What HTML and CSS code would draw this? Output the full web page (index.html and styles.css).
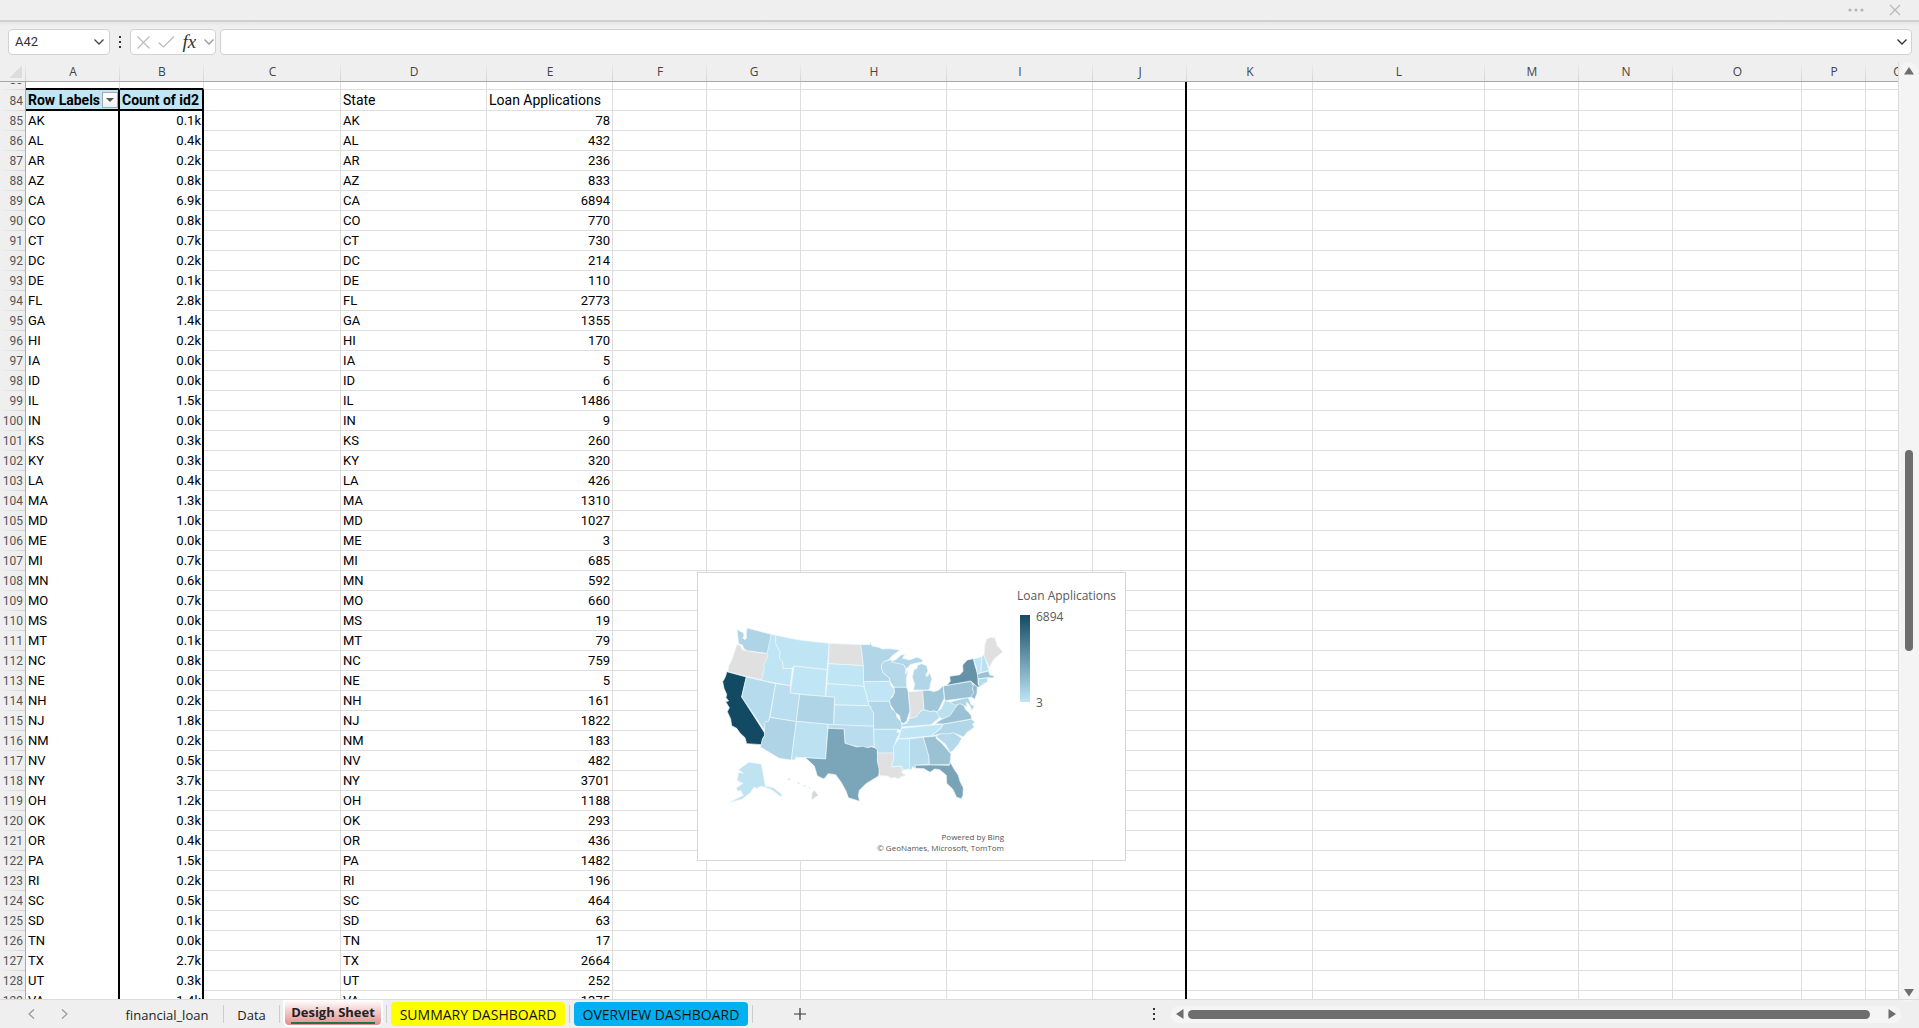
FILE: index.html
```html
<!DOCTYPE html>
<html lang="en">
<head>
<meta charset="utf-8">
<title>Desigh Sheet</title>
<link rel="stylesheet" href="styles.css">
</head>
<body>
<header class="titlebar">
  <button class="icon-btn" aria-label="More"><svg width="16" height="4" viewBox="0 0 16 4" fill="#b5b5b5"><circle cx="2" cy="2" r="1.6"/><circle cx="8" cy="2" r="1.6"/><circle cx="14" cy="2" r="1.6"/></svg></button>
  <button class="icon-btn" aria-label="Close"><svg width="12" height="12" viewBox="0 0 12 12" stroke="#b8b8b8" stroke-width="1.2"><path d="M1 1l10 10M11 1L1 11"/></svg></button>
</header>
<div class="formula-row">
  <div class="field name-box">
    <input class="name-input" aria-label="Name box" value="A42">
    <button class="icon-btn" aria-label="Names"><svg width="10" height="6" viewBox="0 0 10 6" fill="none" stroke="#444" stroke-width="1.3"><path d="M.5.5L5 5 9.500.5"/></svg></button>
  </div>
  <svg class="grip" width="3" height="12" viewBox="0 0 3 12" fill="#333"><path d="M0 0h2v2H0zM0 5h2v2H0zM0 10h2v2H0z"/></svg>
  <div class="field fx-box">
    <button class="icon-btn" aria-label="Cancel"><svg width="13" height="13" viewBox="0 0 13 13" stroke="#bcbcbc" stroke-width="1.2"><path d="M.5.5l12 12M12.500.5l-12 12"/></svg></button>
    <button class="icon-btn" aria-label="Enter"><svg width="17" height="12" viewBox="0 0 17 12" fill="none" stroke="#bcbcbc" stroke-width="1.2"><path d="M.5 6.500L5.500 11 16 .5"/></svg></button>
    <button class="icon-btn fx" aria-label="Insert function">fx</button>
    <button class="icon-btn" aria-label="Functions"><svg width="10" height="6" viewBox="0 0 10 6" fill="none" stroke="#999" stroke-width="1.3"><path d="M.5.5L5 5 9.500.5"/></svg></button>
  </div>
  <div class="field formula">
    <input class="formula-input" aria-label="Formula bar" value="">
    <button class="icon-btn" aria-label="Expand formula bar"><svg width="10" height="6" viewBox="0 0 10 6" fill="none" stroke="#333" stroke-width="1.4"><path d="M.5.5L5 5 9.500.5"/></svg></button>
  </div>
</div>
<main class="workspace">
  <div class="pane">
    <table class="sheet">
      <colgroup id="cols"></colgroup>
      <thead><tr id="letters"></tr></thead>
      <tbody id="rows"></tbody>
    </table>
    <svg class="chart" viewBox="0 0 427 287" role="img" aria-label="Loan applications by state">
      <defs><linearGradient id="ramp" x1="0" y1="0" x2="0" y2="1"><stop offset="0" stop-color="#124a63"/><stop offset="1" stop-color="#c0e6f6"/></linearGradient></defs>
      <g class="map" transform="scale(.3333) translate(-24 -24)">
        <path fill="#aed4e5" d="M141 193l9 6 10 4 2 10-4 5 6 6 6-5-1-14 2-16 73 19-9 58-22-3-28-4-14-1-10-8-4-10-11-4z"/>
        <path fill="#e0e0e0" d="M141 238l11 4 4 12 29 6 50 6 3 8-13 26 4 8-10 38-105-26 2-16 12-26z"/>
        <path fill="#124a63" d="M110 320L169 336 155 396 224 504 225 510 218 522 215 539 170 536 165 518 150 504 140 490 125 482 122 462 112 440 118 428 107 410 116 408 108 398 110 388 102 370 98 350 104 340 108 330z"/>
        <path fill="#b6dbec" d="M169 336l88 20-18 101-3 12-8 1-4 26-69-100z"/>
        <path fill="#bfe4f4" d="M244 208l13 3v25l14 26-3 18 10 10 2 21 27-1-6 52-86-16 8-38-2-8 13-26-3-8z"/>
        <path fill="#bfe4f4" d="M257 211q75 18 161 24l-7 79-99-11-5 7-27 1-2-21-10-10 3-18-14-26z"/>
        <path fill="#c0e6f5" d="M312 303l99 11-5 81-105-11z"/>
        <path fill="#e0e0e0" d="M418 235l94 4 4 26 4 37-105-6z"/>
        <path fill="#c0e6f5" d="M415 296l105 6 1 48 2 16-8-3-15-1-89-6z"/>
        <path fill="#c0e6f5" d="M411 356l89 6 15 1 8 4 7 23 7 32-103-2v-23l-27-2z"/>
        <path fill="#badeef" d="M257 356l44 6v22l28 4-10 82-79-13z"/>
        <path fill="#aed4e5" d="M329 388l105 9-3 83-112-11z"/>
        <path fill="#aed4e5" d="M240 457l79 13-15 115-36-5-57-34 3-8 3-15 7-12-1-8 2-33 10-1z"/>
        <path fill="#bce1f1" d="M319 469l95 9-7 104-61-4-29-1-1 7-12 1z"/>
        <path fill="#bbe0f1" d="M434 420l103 2 7 4-2 5 9 12v41l-120-4z"/>
        <path fill="#b9ddee" d="M414 478l137 6 2 62-12-2-11 6-24-4-24-6-17-5-3-43-48-2z"/>
        <path fill="#7ba5b9" d="M414 490L462 492 465 535 482 540 500 546 520 544 532 548 544 545 560 550 563 556V590L569 612 566 633 528 656 508 676 505 692 509 709 475 698 468 678 453 651 437 629 415 626 402 642 382 633 373 603 346 578 407 582z"/>
        <path fill="#b1d6e7" d="M512 239h28l2-7 4 11 19 4 12 5 22-1 31 4-22 16-10 12-17 7-7 13 4 19 20 17 2 10-79 1-1-48-4-37z"/>
        <path fill="#c0e6f5" d="M521 350l79-1 2 11 12 14-2 14-8 8-6 14-64-1-4-19-7-24z"/>
        <path fill="#b1d6e7" d="M534 409h64l7 23 13 8 3 17 12 13 4 14-5 12-8-3h-73v-50l-9-12 2-5-7-4z"/>
        <path fill="#bbe0f1" d="M551 493h73l-3 9h9l-10 20-9 23v20h-50l2-9-10-11z"/>
        <path fill="#e0e0e0" d="M563 564h48l1 15-8 27 31-2 3 13-4 5 14 11-13 1-10 8-10-5-10 3-12-7-24-1-2-22-5-22z"/>
        <path fill="#b5d9ea" d="M580 290l23-6 9 8 28 5 8 15-2 16 8-14-5 27 1 26h-38l-12-18-2-10-20-17-4-19z"/>
        <path fill="#9bc1d4" d="M612 367h38l5 14 5 57-6 17-4 14-10 7-8-6-3-18-14-11-14-23-3-13 10-9 6-14z"/>
        <path fill="#b1d6e7" d="M604 291l15-8 14-13 12-2-7 12 20 5 22-8 10 3 8 7-3 5-17 2-17 5-12 13-8-13-22-5z"/>
        <path fill="#b1d6e7" d="M670 375l4-16-7-24 6-22 8-2 1-9 12-6 16 6 4 16-7 12 4 5 8-11 7 18-5 14-1 13-5 6z"/>
        <path fill="#e0e0e0" d="M655 381l43-4 4 57-12 6-8 15-25 7 4-19z"/>
        <path fill="#a0c6d9" d="M698 377l22-1 10 4 15-4 15-14 3 38-10 20-10 20-12-2-11 2-18-6z"/>
        <path fill="#b9ddee" d="M702 434l18 6 11-2 12 4 8 14-28 23-88 7 1-8 14-3 8-14 22-6 10-15z"/>
        <path fill="#c0e6f5" d="M634 490l126-13-7 12-30 24-98 9 5-15z"/>
        <path fill="#c0e6f5" d="M625 522l34-1v91l-20 3-4-12-31 2 8-26-2-34z"/>
        <path fill="#b6dbec" d="M659 521l41-4 17 58 1 23-43 3 2 10-10-6-2 8-6 1z"/>
        <path fill="#9bc1d4" d="M700 517l38-4 1 8 16 13 28 33-3 31-8 1-54 1-1-25z"/>
        <path fill="#79a4b8" d="M675 601l44-1 59 1 3-9 10 18 14 21 5 18 10 20-1 22-5 10-14-4-12-25-18-17-1-24-20-17-15-2-14 10-18-11-25-1z"/>
        <path fill="#b5d9ea" d="M738 513l17-8 20 1 15-4 25 18-9 17-18 21-8 4-13-24-23-18z"/>
        <path fill="#b1d6e7" d="M760 477l85-14 10 9-8 6 6 8-12 10-10 6-11 14-30-13-15 4-20-1-32 8 30-24z"/>
        <path fill="#9bc1d4" d="M735 476l25-16 20-9 10-16 15-22 17 9 5 12 9 8 8 10 1 10-85 15z"/>
        <path fill="#bbe0f1" d="M740 440l13-8 12-25 15 4 32-3-17 22-15 22-22 10-12-7z"/>
        <path fill="#aed4e5" d="M780 411l55-14 8 22 10 3-7 15-7-17-10-9 2 15-20-10-16 5z"/>
        <path fill="#9bc1d4" d="M760 363l82-14 10 12-3 12 6 11-12 13-78 10z"/>
        <path fill="#93bacd" d="M846 356l16 7-1 22-7 18-11-8 9-12-5-11 3-10z"/>
        <path fill="#6592a7" d="M770 361l11-12-2-15 31-5 9-10-1-19 14-15 18-4 6 24 8 24v29l22-3-22 12-7-6-15-13z"/>
        <path fill="#bfe4f4" d="M851 282l25-7-3 28v20l-11 3-3-20z"/>
        <path fill="#bbe0f1" d="M876 275l6-6 15 47-24 7z"/>
        <path fill="#e0e0e0" d="M882 272l3-35 6-16 12-4 12 2 7 24 7 6 9 12-22 18-8 9-9 20z"/>
        <path fill="#9bc1d4" d="M862 327l33-9 5 12 13 3-4 6-15-1-29 4z"/>
        <path fill="#b6dbec" d="M865 342l28-4-1 13-26 11z"/>
        <path fill="#c0e3f2" d="M146 622l14 3-14-11 30-22 38 5 12 66 24 5 27 21-4 6-26-19-22-10-15-2-9 7-8-5-12 17-25 20-38 9 42-21-9-15-8 3-4-10 20-14-18-8z"/>
        <path fill="#d8d8d8" d="M366 684l7-8 12 15-12 8-8 6zM294 641l5-2 2 6-5 1zM321 651l6 1 4 5-7-1zM339 661h8v3h-8zM354 665l8 4-3 2z"/>
      </g>
      <rect x="322" y="42" width="10" height="87" fill="url(#ramp)"/>
      <text class="legend" x="319" y="27">Loan Applications</text>
      <text class="legend" x="338" y="48">6894</text>
      <text class="legend" x="338" y="134">3</text>
      <text class="credit" x="306" y="267">Powered by Bing</text>
      <text class="credit" x="306" y="278">© GeoNames, Microsoft, TomTom</text>
    </svg>
  </div>
  <div class="vscroll">
    <svg width="10" height="8" viewBox="0 0 10 8" fill="#6e6e6e"><path d="M5 0l5 7.500H0z"/></svg>
    <div class="vtrack"><div class="vthumb"></div></div>
    <svg width="10" height="8" viewBox="0 0 10 8" fill="#6e6e6e"><path d="M0 0h10L5 7.500z"/></svg>
  </div>
</main>
<footer class="tabbar">
  <nav class="arrows">
    <button class="icon-btn" aria-label="Previous sheet"><svg width="7" height="10" viewBox="0 0 7 10" fill="none" stroke="#999" stroke-width="1.2"><path d="M6 .5L1 5l5 4.500"/></svg></button>
    <button class="icon-btn" aria-label="Next sheet"><svg width="7" height="10" viewBox="0 0 7 10" fill="none" stroke="#999" stroke-width="1.2"><path d="M1 .5L6 5 1 9.500"/></svg></button>
  </nav>
  <button class="tab tab-loan">financial_loan</button>
  <span class="sep"></span>
  <button class="tab tab-data">Data</button>
  <span class="sep"></span>
  <button class="tab tab-active"><span class="tab-name">Desigh Sheet</span></button>
  <span class="sep"></span>
  <button class="tab tab-dash yellow">SUMMARY DASHBOARD</button>
  <span class="sep"></span>
  <button class="tab tab-dash blue">OVERVIEW DASHBOARD</button>
  <span class="sep"></span>
  <button class="icon-btn add" aria-label="New sheet"><svg width="12" height="12" viewBox="0 0 12 12" stroke="#333" stroke-width="1.2"><path d="M6 0v12M0 6h12"/></svg></button>
  <svg class="tab-grip" width="2" height="12" viewBox="0 0 2 12" fill="#333"><path d="M0 0h2v2H0zM0 5h2v2H0zM0 10h2v2H0z"/></svg>
  <div class="hscroll">
    <svg width="8" height="10" viewBox="0 0 8 10" fill="#6e6e6e"><path d="M7.500 0v10L0 5z"/></svg>
    <div class="htrack"><div class="hthumb"></div></div>
    <svg width="8" height="10" viewBox="0 0 8 10" fill="#6e6e6e"><path d="M.5 0v10L8 5z"/></svg>
  </div>
</footer>
<script src="script.js"></script>
</body>
</html>
```
FILE: script.js
```js
const widths = [26, 94, 84, 137, 146, 126, 94, 94, 146, 146, 94, 126, 172, 94, 94, 129, 64, 64];
const letters = ['', ...'ABCDEFGHIJKLMNOPQ'];
const data = `AK 0.1k 78
AL 0.4k 432
AR 0.2k 236
AZ 0.8k 833
CA 6.9k 6894
CO 0.8k 770
CT 0.7k 730
DC 0.2k 214
DE 0.1k 110
FL 2.8k 2773
GA 1.4k 1355
HI 0.2k 170
IA 0.0k 5
ID 0.0k 6
IL 1.5k 1486
IN 0.0k 9
KS 0.3k 260
KY 0.3k 320
LA 0.4k 426
MA 1.3k 1310
MD 1.0k 1027
ME 0.0k 3
MI 0.7k 685
MN 0.6k 592
MO 0.7k 660
MS 0.0k 19
MT 0.1k 79
NC 0.8k 759
NE 0.0k 5
NH 0.2k 161
NJ 1.8k 1822
NM 0.2k 183
NV 0.5k 482
NY 3.7k 3701
OH 1.2k 1188
OK 0.3k 293
OR 0.4k 436
PA 1.5k 1482
RI 0.2k 196
SC 0.5k 464
SD 0.1k 63
TN 0.0k 17
TX 2.7k 2664
UT 0.3k 252
VA 1.4k 1375`.split('\n').map(line => line.split(' '));

document.getElementById('cols').innerHTML =
  widths.map(w => `<col style="width:${w}px">`).join('');
document.getElementById('letters').innerHTML =
  letters.map((l, i) => i ? `<th scope="col">${l}</th>` : '<td class="corner"></td>').join('');

function row(number, cells, kind) {
  const tds = letters.slice(1).map(l => `<td class="c-${l}">${cells[l] || ''}</td>`).join('');
  return `<tr class="${kind}"><th scope="row"><span>${number}</span></th>${tds}</tr>`;
}

const filter = '<button class="filter" aria-label="Filter row labels"></button>';
const rows = [
  row(83, {}, 'partial'),
  row(84, { A: 'Row Labels' + filter, B: 'Count of id2', D: 'State', E: 'Loan Applications' }, 'heading'),
  ...data.map(([state, share, count], i) =>
    row(85 + i, { A: state, B: share, D: state, E: count }, 'record'))
];
document.getElementById('rows').innerHTML = rows.join('');
```
FILE: styles.css
```css
* { box-sizing: border-box; }
body {
  margin: 0;
  height: 100vh;
  display: flex;
  flex-direction: column;
  overflow: hidden;
  background: #efefef;
  color: #000;
  font: 13px/18px Roboto, sans-serif;
}
button, input {
  margin: 0;
  padding: 0;
  border: 0;
  background: none;
  font: inherit;
  color: inherit;
  outline: 0;
}
.icon-btn { display: flex; align-items: center; justify-content: center; }

.titlebar {
  flex: none;
  height: 22px;
  display: flex;
  justify-content: flex-end;
  align-items: center;
  gap: 25px;
  padding-right: 18px;
  border-bottom: 2px solid #d0d0d0;
}
.formula-row {
  flex: none;
  height: 40px;
  display: flex;
  align-items: center;
  padding: 0 7px 0 8px;
  background: linear-gradient(#e6e6e6, #efefef 4px);
}
.field {
  height: 26px;
  display: flex;
  align-items: center;
  border: 1px solid #d2d2d2;
  border-radius: 4px;
  background: #fff;
}
.name-box { width: 102px; padding: 0 5px 0 6px; }
.name-input { flex: 1; min-width: 0; color: #333; }
.grip { margin: 0 8px 0 9px; }
.fx-box { width: 86px; padding: 0 1px 0 6px; justify-content: space-between; }
.fx { font: italic 19px/20px "Liberation Serif", serif; color: #333; }
.formula { flex: 1; margin-left: 4px; padding-right: 4px; }
.formula-input { flex: 1; }

.workspace { flex: 1; min-height: 0; display: flex; }
.pane {
  position: relative;
  flex: 1;
  min-width: 0;
  overflow: hidden;
  background: #fff;
  border-right: 1px solid #dcdcdc;
}
.sheet { table-layout: fixed; width: 1930px; border-collapse: separate; border-spacing: 0; }
.sheet td, .sheet th { padding: 0; white-space: nowrap; overflow: hidden; }
thead th, .sheet .corner {
  height: 20px;
  border-right: 0;
  border-bottom: 1px solid #a8a8a8;
  background: linear-gradient(#efefef, #d4d4d4) right / 1px 100% no-repeat #efefef;
  font: 12px/18px "Open Sans", sans-serif;
  color: #444;
}
.sheet .corner {
  background:
    linear-gradient(135deg, transparent 50%, #dcdcdc 50%) 10px 4px / 12px 12px no-repeat,
    linear-gradient(#efefef, #d4d4d4) right / 1px 100% no-repeat #efefef;
}
tbody th {
  height: 20px;
  border-right: 1px solid #a8a8a8;
  background: linear-gradient(90deg, #efefef, #d4d4d4) bottom / 100% 1px no-repeat #efefef;
  font: 12px/17px Roboto, sans-serif;
  color: #555;
  text-align: right;
}
tbody th span { display: block; padding: 1px 2px 0 0; }
tbody td {
  height: 20px;
  border-right: 1px solid #dedede;
  border-bottom: 1px solid #dedede;
}
.sheet .record td { padding: 1px 2px 0; line-height: 18px; vertical-align: top; }
.partial td, .partial th { height: 8px; }
.partial th span {
  display: flex;
  align-items: flex-end;
  justify-content: flex-end;
  height: 7px;
  line-height: 20px;
  padding-top: 0;
  overflow: hidden;
}
.partial .c-A, .partial .c-B { border-bottom: 2px solid #000; }
.heading td, .heading th { height: 21px; }
.sheet .heading td { padding: 2px 2px 0; font-size: 14px; line-height: 17px; vertical-align: top; }
.heading .c-A, .heading .c-B {
  border-right: 2px solid #000;
  border-bottom: 2px solid #000;
  background: #c0e6f5;
  font-weight: 700;
}
.heading .c-A { position: relative; }
.record .c-A, .record .c-B { border-right: 2px solid #000; border-bottom: 0; }
.sheet .record .c-B { padding-right: 1px; text-align: right; }
.record .c-E { text-align: right; }
tbody .c-J {
  border: 0;
  background:
    linear-gradient(#000, #000) right / 2px 100% no-repeat,
    linear-gradient(#dedede, #dedede) bottom / 100% 1px no-repeat;
}
.filter {
  position: absolute;
  right: 0;
  top: 2px;
  width: 16px;
  height: 16px;
  border: 1px solid #a8a8b0;
  background: linear-gradient(#fff, #eef0f4);
}
.filter::after {
  content: "";
  position: absolute;
  left: 3px;
  top: 5px;
  border: 4px solid transparent;
  border-top-color: #555;
  border-bottom: 0;
}

.chart {
  position: absolute;
  left: 697px;
  top: 510px;
  width: 429px;
  height: 289px;
  background: #fff;
  border: 1px solid #d6d6d6;
}
.map { stroke: #eef8fc; stroke-width: 2; stroke-linejoin: round; }
.legend { font: 12px "Open Sans", sans-serif; fill: #595959; }
.credit { font: 8px "Open Sans", sans-serif; fill: #555; text-anchor: end; }

.vscroll {
  flex: none;
  width: 20px;
  margin-bottom: -3px;
  padding: 5px 0;
  display: flex;
  flex-direction: column;
  align-items: center;
  background: #f4f4f4;
  border-radius: 10px;
}
.vtrack { flex: 1; width: 8px; }
.vthumb { height: 22%; margin-top: 375px; border-radius: 4px; background: #6e6e6e; }

.tabbar {
  flex: none;
  height: 29px;
  display: flex;
  align-items: center;
  padding-right: 18px;
  border-top: 1px solid #dcdcdc;
  font: 13px/20px "Open Sans", sans-serif;
  color: #222;
}
.arrows { width: 111px; display: flex; gap: 26px; padding-left: 28px; }
.tab { height: 24px; padding-top: 2px; text-align: center; white-space: nowrap; }
.tab-loan { width: 112px; }
.tab-data { width: 55px; }
.sep { width: 1px; height: 18px; background: #cdcdcd; }
.tab-active {
  align-self: flex-start;
  width: 100px;
  height: 27px;
  margin: 0 3px;
  padding-top: 0;
  border: 2px solid #fff;
  border-top: 0;
  border-radius: 0 0 6px 6px;
  background: linear-gradient(#fff, #e58c8c);
  font-weight: 700;
}
.tab-name { display: block; margin: 0 6px; border-bottom: 2px solid #217346; line-height: 20px; }
.tab-dash { width: 174px; margin: 0 4px; border-radius: 4px; color: #111; font-size: 14px; }
.yellow { background: #ffff00; }
.blue { background: #00b0f0; }
.add { width: 94px; }
.tab-grip { margin-left: auto; }
.hscroll {
  width: 730px;
  height: 17px;
  margin-left: 16px;
  padding: 0 5px;
  display: flex;
  align-items: center;
  gap: 4px;
  border-radius: 8px;
  background: #f5f5f5;
}
.htrack { flex: 1; }
.hthumb { width: 98%; height: 9px; border-radius: 5px; background: #6e6e6e; }
```
